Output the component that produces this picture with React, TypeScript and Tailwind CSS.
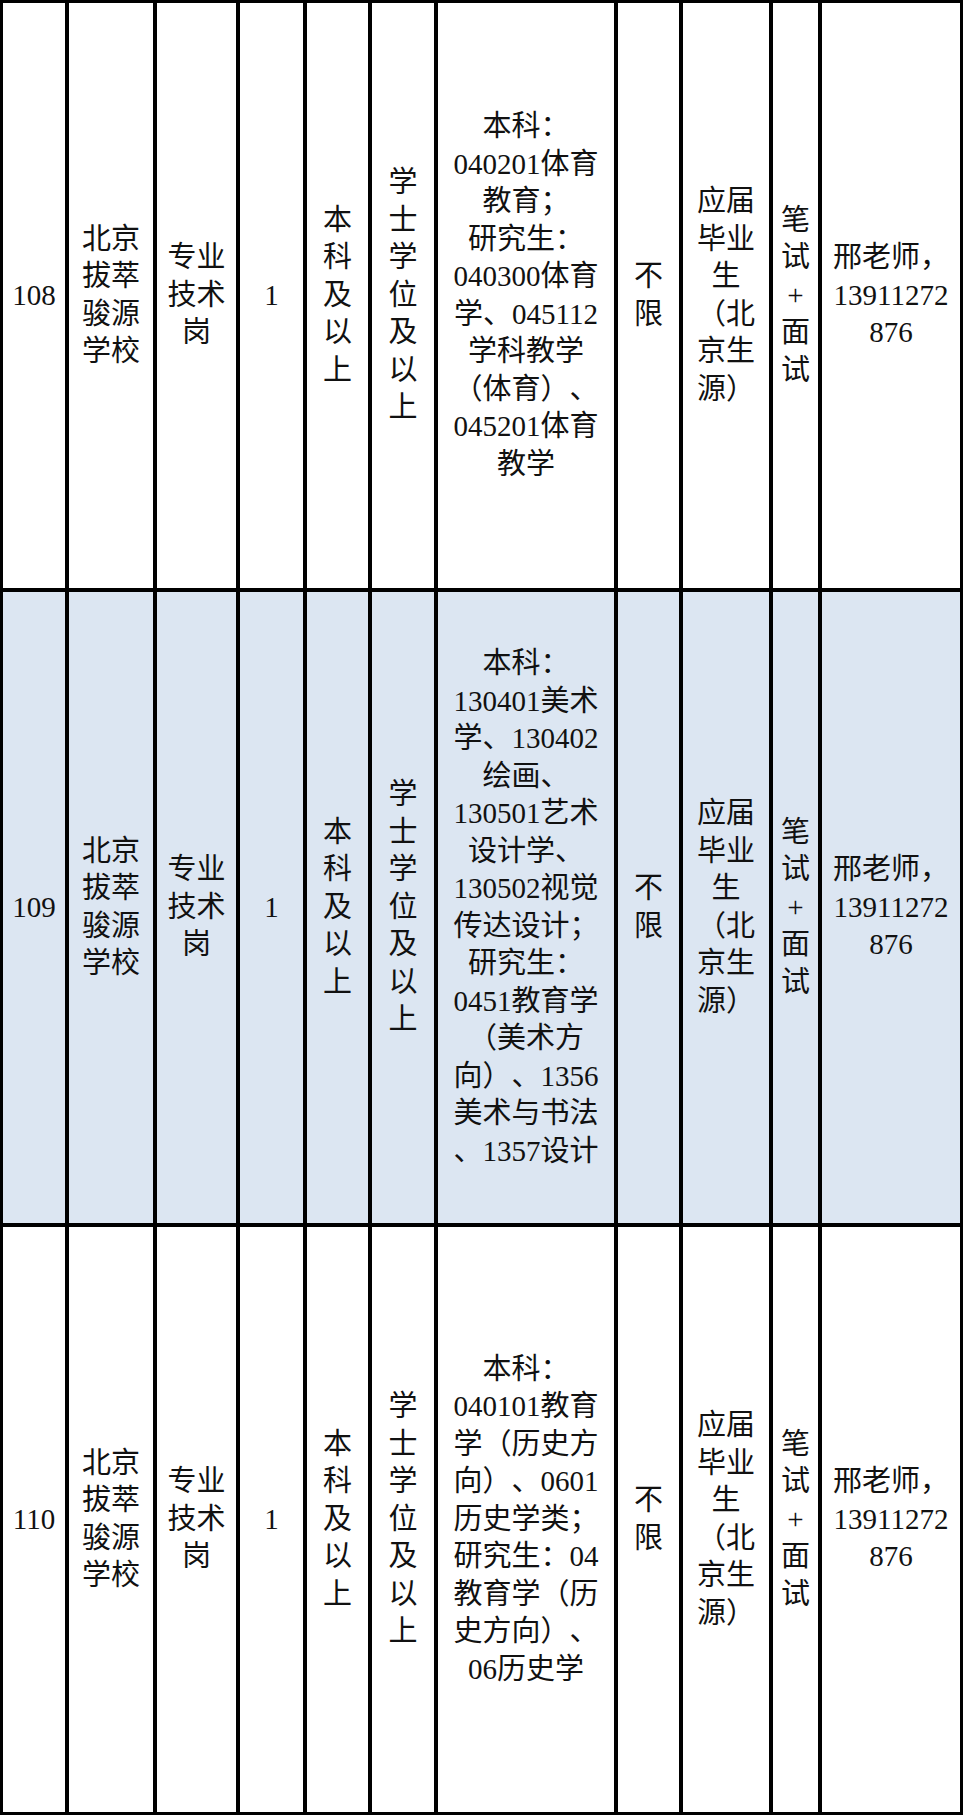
const rows: { bg: string; cells: string[][] }[] = [
  {
    bg: "bg-white",
    cells: [
      ["108"],
      ["北京", "拔萃", "骏源", "学校"],
      ["专业", "技术", "岗"],
      ["1"],
      ["本", "科", "及", "以", "上"],
      ["学", "士", "学", "位", "及", "以", "上"],
      [
        "本科：",
        "040201体育",
        "教育；",
        "研究生：",
        "040300体育",
        "学、045112",
        "学科教学",
        "（体育）、",
        "045201体育",
        "教学",
      ],
      ["不", "限"],
      ["应届", "毕业", "生", "（北", "京生", "源）"],
      ["笔", "试", "+", "面", "试"],
      ["邢老师，", "13911272", "876"],
    ],
  },
  {
    bg: "bg-[#dce6f2]",
    cells: [
      ["109"],
      ["北京", "拔萃", "骏源", "学校"],
      ["专业", "技术", "岗"],
      ["1"],
      ["本", "科", "及", "以", "上"],
      ["学", "士", "学", "位", "及", "以", "上"],
      [
        "本科：",
        "130401美术",
        "学、130402",
        "绘画、",
        "130501艺术",
        "设计学、",
        "130502视觉",
        "传达设计；",
        "研究生：",
        "0451教育学",
        "（美术方",
        "向）、1356",
        "美术与书法",
        "、1357设计",
      ],
      ["不", "限"],
      ["应届", "毕业", "生", "（北", "京生", "源）"],
      ["笔", "试", "+", "面", "试"],
      ["邢老师，", "13911272", "876"],
    ],
  },
  {
    bg: "bg-white",
    cells: [
      ["110"],
      ["北京", "拔萃", "骏源", "学校"],
      ["专业", "技术", "岗"],
      ["1"],
      ["本", "科", "及", "以", "上"],
      ["学", "士", "学", "位", "及", "以", "上"],
      [
        "本科：",
        "040101教育",
        "学（历史方",
        "向）、0601",
        "历史学类；",
        "研究生：04",
        "教育学（历",
        "史方向）、",
        "06历史学",
      ],
      ["不", "限"],
      ["应届", "毕业", "生", "（北", "京生", "源）"],
      ["笔", "试", "+", "面", "试"],
      ["邢老师，", "13911272", "876"],
    ],
  },
];

export default function App() {
  return (
    <div className="w-[963px] bg-white">
      <div className="grid grid-cols-[62px_84px_79px_63px_61px_62px_176px_61px_86px_45px_1fr] grid-rows-[585px_631px_585px] gap-[4px] bg-black p-[3px] font-['Liberation_Serif','Noto_Sans_CJK_SC',serif] text-[29px] leading-[37.5px] text-[#111] [text-spacing-trim:space-all]">
        {rows.map((row, r) =>
          row.cells.map((lines, c) => (
            <div key={`${r}-${c}`} className={`${row.bg} flex flex-col items-center justify-center text-center whitespace-nowrap`}>
              {lines.map((line, i) => (
                <div key={i}>{line}</div>
              ))}
            </div>
          ))
        )}
      </div>
    </div>
  );
}
